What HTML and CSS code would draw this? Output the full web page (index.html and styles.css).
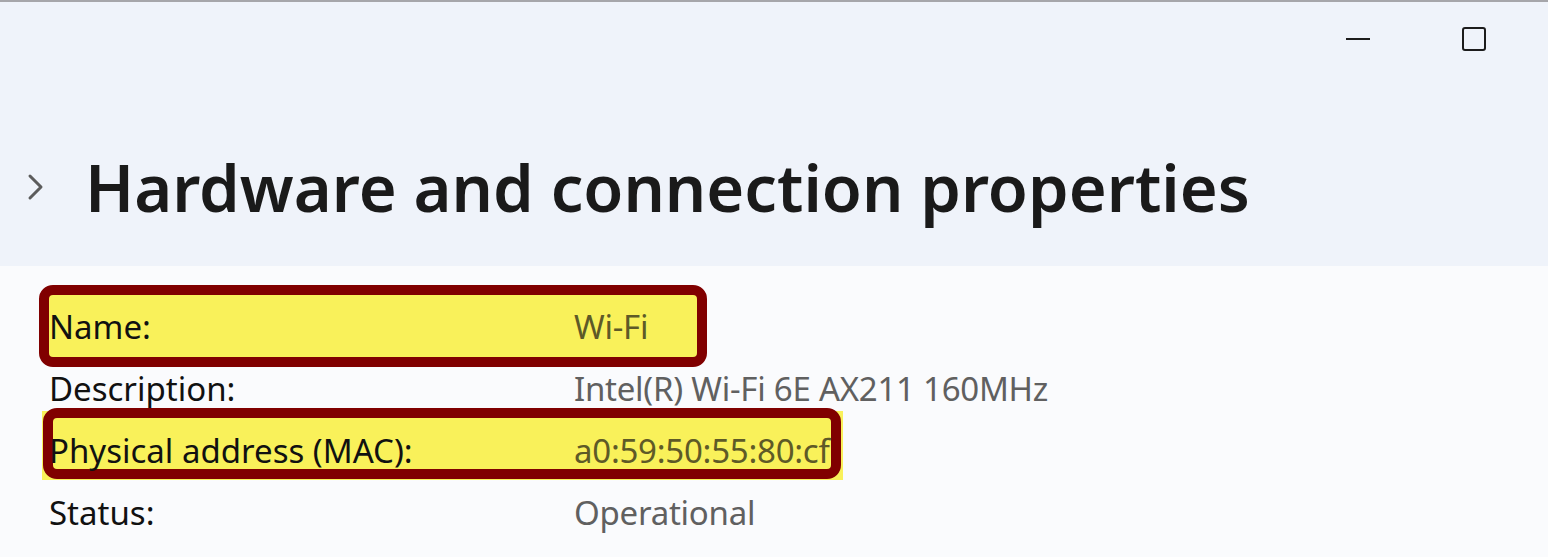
FILE: index.html
```html
<!DOCTYPE html>
<html>
	<head>
		<meta charset="utf-8" />
		<title>Hardware and connection properties</title>
		<link rel="stylesheet" href="styles.css">
	</head>
	<body>
		<div class="window">
			<header class="head">
				<div class="titlebar">
					<button class="ctl" aria-label="Minimize"><span class="ctl-min"></span></button>
					<button class="ctl" aria-label="Maximize"><span class="ctl-max"></span></button>
				</div>
				<div class="section-title">
					<svg class="chevron" width="18" height="28" viewBox="0 0 18 28">
						<path d="M3 3 L14 14 L3 25" fill="none" stroke="#5c5c5c" stroke-width="3" stroke-linecap="round" stroke-linejoin="round"/>
					</svg>
					<h1>Hardware and connection properties</h1>
				</div>
			</header>
			<section class="props">
				<div class="row mark mark-name">
					<span class="label">Name:</span>
					<span class="value">Wi-Fi</span>
				</div>
				<div class="row">
					<span class="label">Description:</span>
					<span class="value">Intel(R) Wi-Fi 6E AX211 160MHz</span>
				</div>
				<div class="row mark mark-mac">
					<span class="label">Physical address (MAC):</span>
					<span class="value">a0:59:50:55:80:cf</span>
				</div>
				<div class="row">
					<span class="label">Status:</span>
					<span class="value">Operational</span>
				</div>
			</section>
		</div>
	</body>
</html>
```

FILE: styles.css
```css
html, body {
	margin: 0;
	height: 100%;
}
body {
	font-family: "Noto Sans", "Open Sans", sans-serif;
	background: #fafbfd;
	color: #1a1a1a;
	overflow: hidden;
}
.window {
	border-top: 2px solid #a6a6aa;
}
.head {
	background: #eff3fa;
	height: 264px;
	display: flex;
	flex-direction: column;
}
.titlebar {
	height: 74px;
	display: flex;
	justify-content: flex-end;
	padding-right: 16px;
}
.ctl {
	width: 116px;
	height: 74px;
	border: 0;
	background: none;
	padding: 0;
	display: flex;
	align-items: center;
	justify-content: center;
}
.ctl-min {
	width: 24px;
	height: 2px;
	background: #1c1c1c;
}
.ctl-max {
	width: 20px;
	height: 20px;
	border: 2px solid #1c1c1c;
	border-radius: 3px;
}
.section-title {
	margin-top: 71px;
	height: 80px;
	display: flex;
	align-items: center;
	padding-left: 27px;
}
.chevron {
	flex: none;
}
h1 {
	margin: 0 0 0 40px;
	font-size: 65px;
	font-weight: 600;
	line-height: 80px;
	color: #1a1a1a;
	white-space: nowrap;
}
/* property rows */
.props {
	padding-top: 29px;
}
.row {
	position: relative;
	z-index: 0;
	height: 62px;
	display: flex;
	align-items: center;
	padding-left: 49px;
	font-size: 33px;
}
.label {
	width: 525px;
	flex: none;
	color: #111;
}
.value {
	color: #606060;
	letter-spacing: -0.25px;
}
.mark .value {
	color: #5e5a27;
}
/* highlight annotations laid over the rows */
.mark::before,
.mark::after {
	content: "";
	position: absolute;
	z-index: -1;
}
.mark::after {
	border: 10px solid #800000;
	border-radius: 14px;
	background: #f9f15a;
	box-sizing: border-box;
}
.mark-name::after {
	left: 39px;
	top: -10px;
	width: 668px;
	height: 82px;
}
.mark-mac::before {
	left: 42px;
	top: -8px;
	width: 801px;
	height: 69px;
	background: #f9f15a;
}
.mark-mac::after {
	left: 43px;
	top: -11px;
	width: 798px;
	height: 71px;
}
```
